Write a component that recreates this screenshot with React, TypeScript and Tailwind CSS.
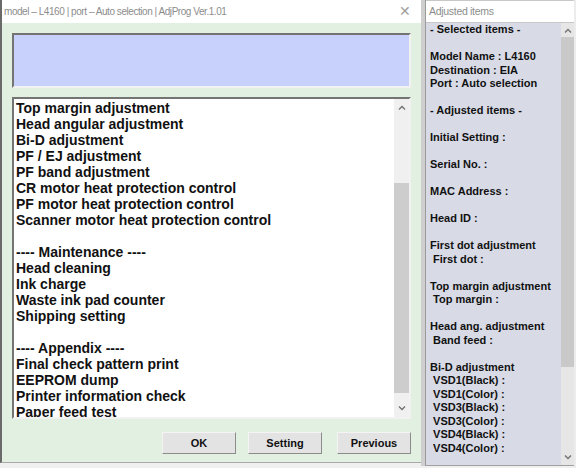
import React from 'react'

const listItems = [
  'Top margin adjustment',
  'Head angular adjustment',
  'Bi-D adjustment',
  'PF / EJ adjustment',
  'PF band adjustment',
  'CR motor heat protection control',
  'PF motor heat protection control',
  'Scanner motor heat protection control',
  '',
  '---- Maintenance ----',
  'Head cleaning',
  'Ink charge',
  'Waste ink pad counter',
  'Shipping setting',
  '',
  '---- Appendix ----',
  'Final check pattern print',
  'EEPROM dump',
  'Printer information check',
  'Paper feed test',
]

const adjusted = [
  '- Selected items -',
  '',
  'Model Name : L4160',
  'Destination : EIA',
  'Port : Auto selection',
  '',
  '- Adjusted items -',
  '',
  'Initial Setting :',
  '',
  'Serial No. :',
  '',
  'MAC Address :',
  '',
  'Head ID :',
  '',
  'First dot adjustment',
  ' First dot :',
  '',
  'Top margin adjustment',
  ' Top margin :',
  '',
  'Head ang. adjustment',
  ' Band feed :',
  '',
  'Bi-D adjustment',
  ' VSD1(Black) :',
  ' VSD1(Color) :',
  ' VSD3(Black) :',
  ' VSD3(Color) :',
  ' VSD4(Black) :',
  ' VSD4(Color) :',
]

function Chevron({ up }: { up?: boolean }) {
  return (
    <svg width="8" height="5" viewBox="0 0 8 5" className="text-[#707070]">
      <path d={up ? 'M1 4.5 L4 1.5 L7 4.5' : 'M1 0.5 L4 3.5 L7 0.5'} fill="none" stroke="currentColor" strokeWidth="1.3" />
    </svg>
  )
}

function Btn({ label, className = '' }: { label: string; className?: string }) {
  return (
    <button
      className={
        'block h-[22px] w-[74px] border border-t-[#f4f4f4] border-l-[#f4f4f4] border-r-[#8c8c8c] border-b-[#8c8c8c] bg-[#e3e3e3] text-[11px] font-bold text-[#111] ' +
        className
      }
    >
      {label}
    </button>
  )
}

export default function App() {
  return (
    <div className="flex h-[468px] w-[576px] overflow-hidden bg-[#f0f0f0] font-['Liberation_Sans',Arial,sans-serif]">
      {/* main window */}
      <div className="flex h-[463px] w-[421px] flex-col border-l-2 border-b border-l-[#6a6a6a] border-b-[#a8a8a8] bg-[#e2f0e2]">
        <div className="flex h-[23px] items-center justify-between bg-white pl-[2px] pr-[10px] text-[#8d8d8d]">
          <span className="whitespace-nowrap text-[10px] tracking-[-0.45px]">model – L4160 | port – Auto selection | AdjProg Ver.1.01</span>
          <span className="text-[14px] font-light text-[#a0a0a0]">✕</span>
        </div>
        <div className="flex flex-1 flex-col px-[10px] pt-[10px]">
          <div className="h-[55px] w-[399px] border-2 border-t-[#747474] border-l-[#747474] border-r-[#f2f2f2] border-b-[#f2f2f2] bg-[#c8d1fc]" />
          <div className="mt-[9px] flex h-[322px] w-[399px] border-2 border-t-[#747474] border-l-[#747474] border-r-[#f2f2f2] border-b-[#f2f2f2] bg-white">
            <div className="flex-1 overflow-hidden pl-[2px] pt-[1px] text-[14px] font-bold leading-[16px] text-[#111]">
              {listItems.map((t, i) => (
                <div key={i} className="h-[16px] whitespace-pre">{t || ' '}</div>
              ))}
            </div>
            <div className="flex w-[15px] flex-col bg-[#f0f0f0]">
              <div className="flex h-[17px] items-center justify-center"><Chevron up /></div>
              <div className="mt-[67px] h-[210px] bg-[#cdcdcd]" />
              <div className="flex-1" />
              <div className="flex h-[17px] items-center justify-center"><Chevron /></div>
            </div>
          </div>
          <div className="mt-[13px] flex items-start justify-end gap-[12px]">
            <Btn label="OK" />
            <Btn label="Setting" />
            <Btn label="Previous" className="ml-[3px]" />
          </div>
        </div>
      </div>
      {/* gap between windows */}
      <div className="h-[466px] w-[4px] bg-[#cfcfcf]" />
      {/* adjusted items window */}
      <div className="flex h-[466px] w-[149px] flex-col border-l border-b border-l-[#9a9a9a] border-b-[#a0a0a0]">
        <div className="flex h-[23px] items-center border-b border-t border-t-[#c8c8c8] border-b-[#c8c8c8] bg-white pl-[3px] text-[10.5px] tracking-[-0.3px] text-[#8d8d8d]">
          Adjusted items
        </div>
        <div className="flex flex-1 overflow-hidden">
          <div className="flex-1 overflow-hidden bg-[#d8dbe6] pl-[4px] text-[11px] font-bold leading-[13.5px] text-[#111]">
            {adjusted.map((t, i) => (
              <div key={i} className="h-[13.5px] whitespace-pre">{t || ' '}</div>
            ))}
          </div>
          <div className="flex w-[13px] flex-col bg-[#e6e6e6]">
            <div className="flex h-[14px] items-center justify-center"><Chevron up /></div>
            <div className="h-[330px] bg-[#c9c9c9]" />
            <div className="flex-1" />
            <div className="flex h-[16px] items-center justify-center"><Chevron /></div>
          </div>
        </div>
      </div>
      <div className="flex-1 bg-[#ececec]" />
    </div>
  )
}
